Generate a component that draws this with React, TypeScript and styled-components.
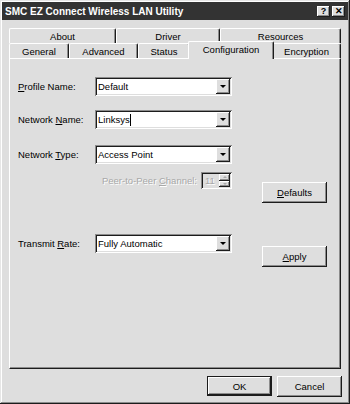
import React from 'react';
import styled, { createGlobalStyle } from 'styled-components';

const FACE = '#dedede';
const LIGHT = '#ffffff';
const SHADOW = '#8c8c8c';
const DARK = '#1c1c1c';

const Global = createGlobalStyle`
  html, body { margin: 0; padding: 0; background: ${FACE}; }
  body { font-family: "Liberation Sans", Arial, sans-serif; font-size: 9.5px; color: #000; }
  * { box-sizing: border-box; }
`;

const raised = `
  box-shadow: inset -1px -1px 0 ${DARK}, inset 1px 1px 0 ${LIGHT}, inset -2px -2px 0 ${SHADOW};
`;
const sunken = `
  box-shadow: inset 1px 1px 0 ${SHADOW}, inset -1px -1px 0 ${LIGHT}, inset 2px 2px 0 ${DARK}, inset -2px -2px 0 ${FACE};
`;

const Window = styled.div`
  width: 350px;
  height: 404px;
  background: ${FACE};
  padding: 2px;
  display: flex;
  flex-direction: column;
  box-shadow: inset -1px -1px 0 ${DARK}, inset 1px 1px 0 #e6e6e6, inset -2px -2px 0 ${SHADOW}, inset 2px 2px 0 ${LIGHT};
`;

const TitleBar = styled.div`
  height: 18px;
  background: #333333;
  color: #fff;
  font-weight: bold;
  font-size: 10px;
  display: flex;
  align-items: center;
  justify-content: space-between;
  padding: 0 3px 0 3px;
`;

const TitleButtons = styled.div`
  display: flex;
  gap: 2px;
`;

const TitleButton = styled.div`
  width: 13px;
  height: 11px;
  background: ${FACE};
  color: #000;
  font-weight: bold;
  font-size: 9px;
  line-height: 11px;
  text-align: center;
  ${raised}
`;

const Content = styled.div`
  display: flex;
  flex-direction: column;
  padding: 8px 7px 0 7px;
`;

const TabStrip = styled.div`
  display: flex;
  flex-direction: column;
`;

const TabRow = styled.div`
  display: flex;
  height: 15px;
  align-items: flex-end;
`;

const Tab = styled.div<{ $w: number; $active?: boolean }>`
  flex: none;
  width: ${p => (p.$active ? p.$w + 4 : p.$w)}px;
  height: ${p => (p.$active ? 18 : 15)}px;
  margin: ${p => (p.$active ? '-3px -2px -1px -2px' : '0')};
  position: relative;
  z-index: ${p => (p.$active ? 2 : 1)};
  background: ${FACE};
  border-top: 1px solid ${LIGHT};
  border-left: 1px solid ${LIGHT};
  border-right: 1px solid ${DARK};
  border-radius: 2px 2px 0 0;
  box-shadow: inset -1px 0 0 ${SHADOW};
  display: flex;
  align-items: center;
  justify-content: center;
  padding-bottom: ${p => (p.$active ? 2 : 0)}px;
  white-space: nowrap;
`;

const Panel = styled.div`
  height: 311px;
  background: ${FACE};
  border-top: 1px solid ${LIGHT};
  border-left: 1px solid ${LIGHT};
  border-right: 1px solid ${DARK};
  border-bottom: 1px solid ${DARK};
  box-shadow: inset -1px -1px 0 ${SHADOW};
  display: flex;
  align-items: flex-start;
  padding: 18px 0 0 8px;
`;

const FormColumn = styled.div`
  display: flex;
  flex-direction: column;
`;

const FieldRow = styled.div<{ $top: number }>`
  display: flex;
  align-items: center;
  height: 19px;
  margin-top: ${p => p.$top}px;
`;

const Label = styled.span`
  width: 77px;
  flex: none;
  white-space: nowrap;
`;

const Combo = styled.div`
  width: 137px;
  height: 19px;
  background: #fff;
  display: flex;
  align-items: center;
  padding: 2px;
  ${sunken}
`;

const ComboText = styled.span`
  flex: 1;
  padding-left: 1px;
  display: flex;
  align-items: center;
  white-space: nowrap;
`;

const Caret = styled.span`
  display: inline-block;
  width: 1px;
  height: 12px;
  background: #000;
`;

const DropButton = styled.div`
  width: 14px;
  height: 15px;
  background: ${FACE};
  display: flex;
  align-items: center;
  justify-content: center;
  ${raised}
`;

const DownArrow = styled.span<{ $color?: string; $size?: number }>`
  width: 0;
  height: 0;
  border-left: ${p => p.$size ?? 3}px solid transparent;
  border-right: ${p => p.$size ?? 3}px solid transparent;
  border-top: ${p => p.$size ?? 3}px solid ${p => p.$color ?? '#000'};
`;

const UpArrow = styled.span<{ $color?: string; $size?: number }>`
  width: 0;
  height: 0;
  border-left: ${p => p.$size ?? 3}px solid transparent;
  border-right: ${p => p.$size ?? 3}px solid transparent;
  border-bottom: ${p => p.$size ?? 3}px solid ${p => p.$color ?? '#000'};
`;

const PeerRow = styled.div`
  display: flex;
  align-items: center;
  justify-content: flex-end;
  height: 17px;
  width: 214px;
  margin-top: 8px;
  gap: 4px;
`;

const DisabledLabel = styled.span`
  color: #a8a8a8;
  text-shadow: 1px 1px 0 #fff;
  white-space: nowrap;
`;

const Spinner = styled.div`
  width: 31px;
  height: 17px;
  background: ${FACE};
  display: flex;
  align-items: center;
  padding: 2px;
  ${sunken}
`;

const SpinText = styled.span`
  flex: 1;
  padding-left: 2px;
  color: #a8a8a8;
  text-shadow: 1px 1px 0 #fff;
`;

const SpinButtons = styled.div`
  width: 11px;
  height: 13px;
  display: flex;
  flex-direction: column;
`;

const SpinHalf = styled.div`
  flex: 1;
  background: ${FACE};
  display: flex;
  align-items: center;
  justify-content: center;
  ${raised}
`;

const ButtonColumn = styled.div`
  display: flex;
  flex-direction: column;
  margin-left: 30px;
  padding-top: 105px;
`;

const Button = styled.div<{ $top?: number; $default?: boolean }>`
  width: 65px;
  height: ${p => (p.$default ? 20 : 21)}px;
  margin-top: ${p => p.$top ?? 0}px;
  background: ${FACE};
  display: flex;
  align-items: center;
  justify-content: center;
  border: ${p => (p.$default ? `1px solid ${DARK}` : 'none')};
  ${raised}
`;

const Footer = styled.div`
  display: flex;
  justify-content: flex-end;
  gap: 5px;
  margin-top: 7px;
  margin-right: -1px;
`;

const U = styled.span`
  text-decoration: underline;
`;

export default function App() {
  return (
    <>
      <Global />
      <Window>
        <TitleBar>
          <span>SMC EZ Connect Wireless LAN Utility</span>
          <TitleButtons>
            <TitleButton>?</TitleButton>
            <TitleButton>✕</TitleButton>
          </TitleButtons>
        </TitleBar>
        <Content>
          <TabStrip>
            <TabRow>
              <Tab $w={107}>About</Tab>
              <Tab $w={104}>Driver</Tab>
              <Tab $w={121}>Resources</Tab>
            </TabRow>
            <TabRow>
              <Tab $w={60}>General</Tab>
              <Tab $w={69}>Advanced</Tab>
              <Tab $w={52}>Status</Tab>
              <Tab $w={82} $active>Configuration</Tab>
              <Tab $w={69}>Encryption</Tab>
            </TabRow>
          </TabStrip>
          <Panel>
            <FormColumn>
              <FieldRow $top={0}>
                <Label><U>P</U>rofile Name:</Label>
                <Combo>
                  <ComboText>Default</ComboText>
                  <DropButton><DownArrow /></DropButton>
                </Combo>
              </FieldRow>
              <FieldRow $top={14}>
                <Label>Network <U>N</U>ame:</Label>
                <Combo>
                  <ComboText>Linksys<Caret /></ComboText>
                  <DropButton><DownArrow /></DropButton>
                </Combo>
              </FieldRow>
              <FieldRow $top={16}>
                <Label>Network <U>T</U>ype:</Label>
                <Combo>
                  <ComboText>Access Point</ComboText>
                  <DropButton><DownArrow /></DropButton>
                </Combo>
              </FieldRow>
              <PeerRow>
                <DisabledLabel>Peer-to-Peer <U>C</U>hannel:</DisabledLabel>
                <Spinner>
                  <SpinText>11</SpinText>
                  <SpinButtons>
                    <SpinHalf><UpArrow $size={2} $color="#a8a8a8" /></SpinHalf>
                    <SpinHalf><DownArrow $size={2} $color="#a8a8a8" /></SpinHalf>
                  </SpinButtons>
                </Spinner>
              </PeerRow>
              <FieldRow $top={45}>
                <Label>Transmit <U>R</U>ate:</Label>
                <Combo>
                  <ComboText>Fully Automatic</ComboText>
                  <DropButton><DownArrow /></DropButton>
                </Combo>
              </FieldRow>
            </FormColumn>
            <ButtonColumn>
              <Button><U>D</U>efaults</Button>
              <Button $top={43}><U>A</U>pply</Button>
            </ButtonColumn>
          </Panel>
          <Footer>
            <Button $default>OK</Button>
            <Button>Cancel</Button>
          </Footer>
        </Content>
      </Window>
    </>
  );
}
